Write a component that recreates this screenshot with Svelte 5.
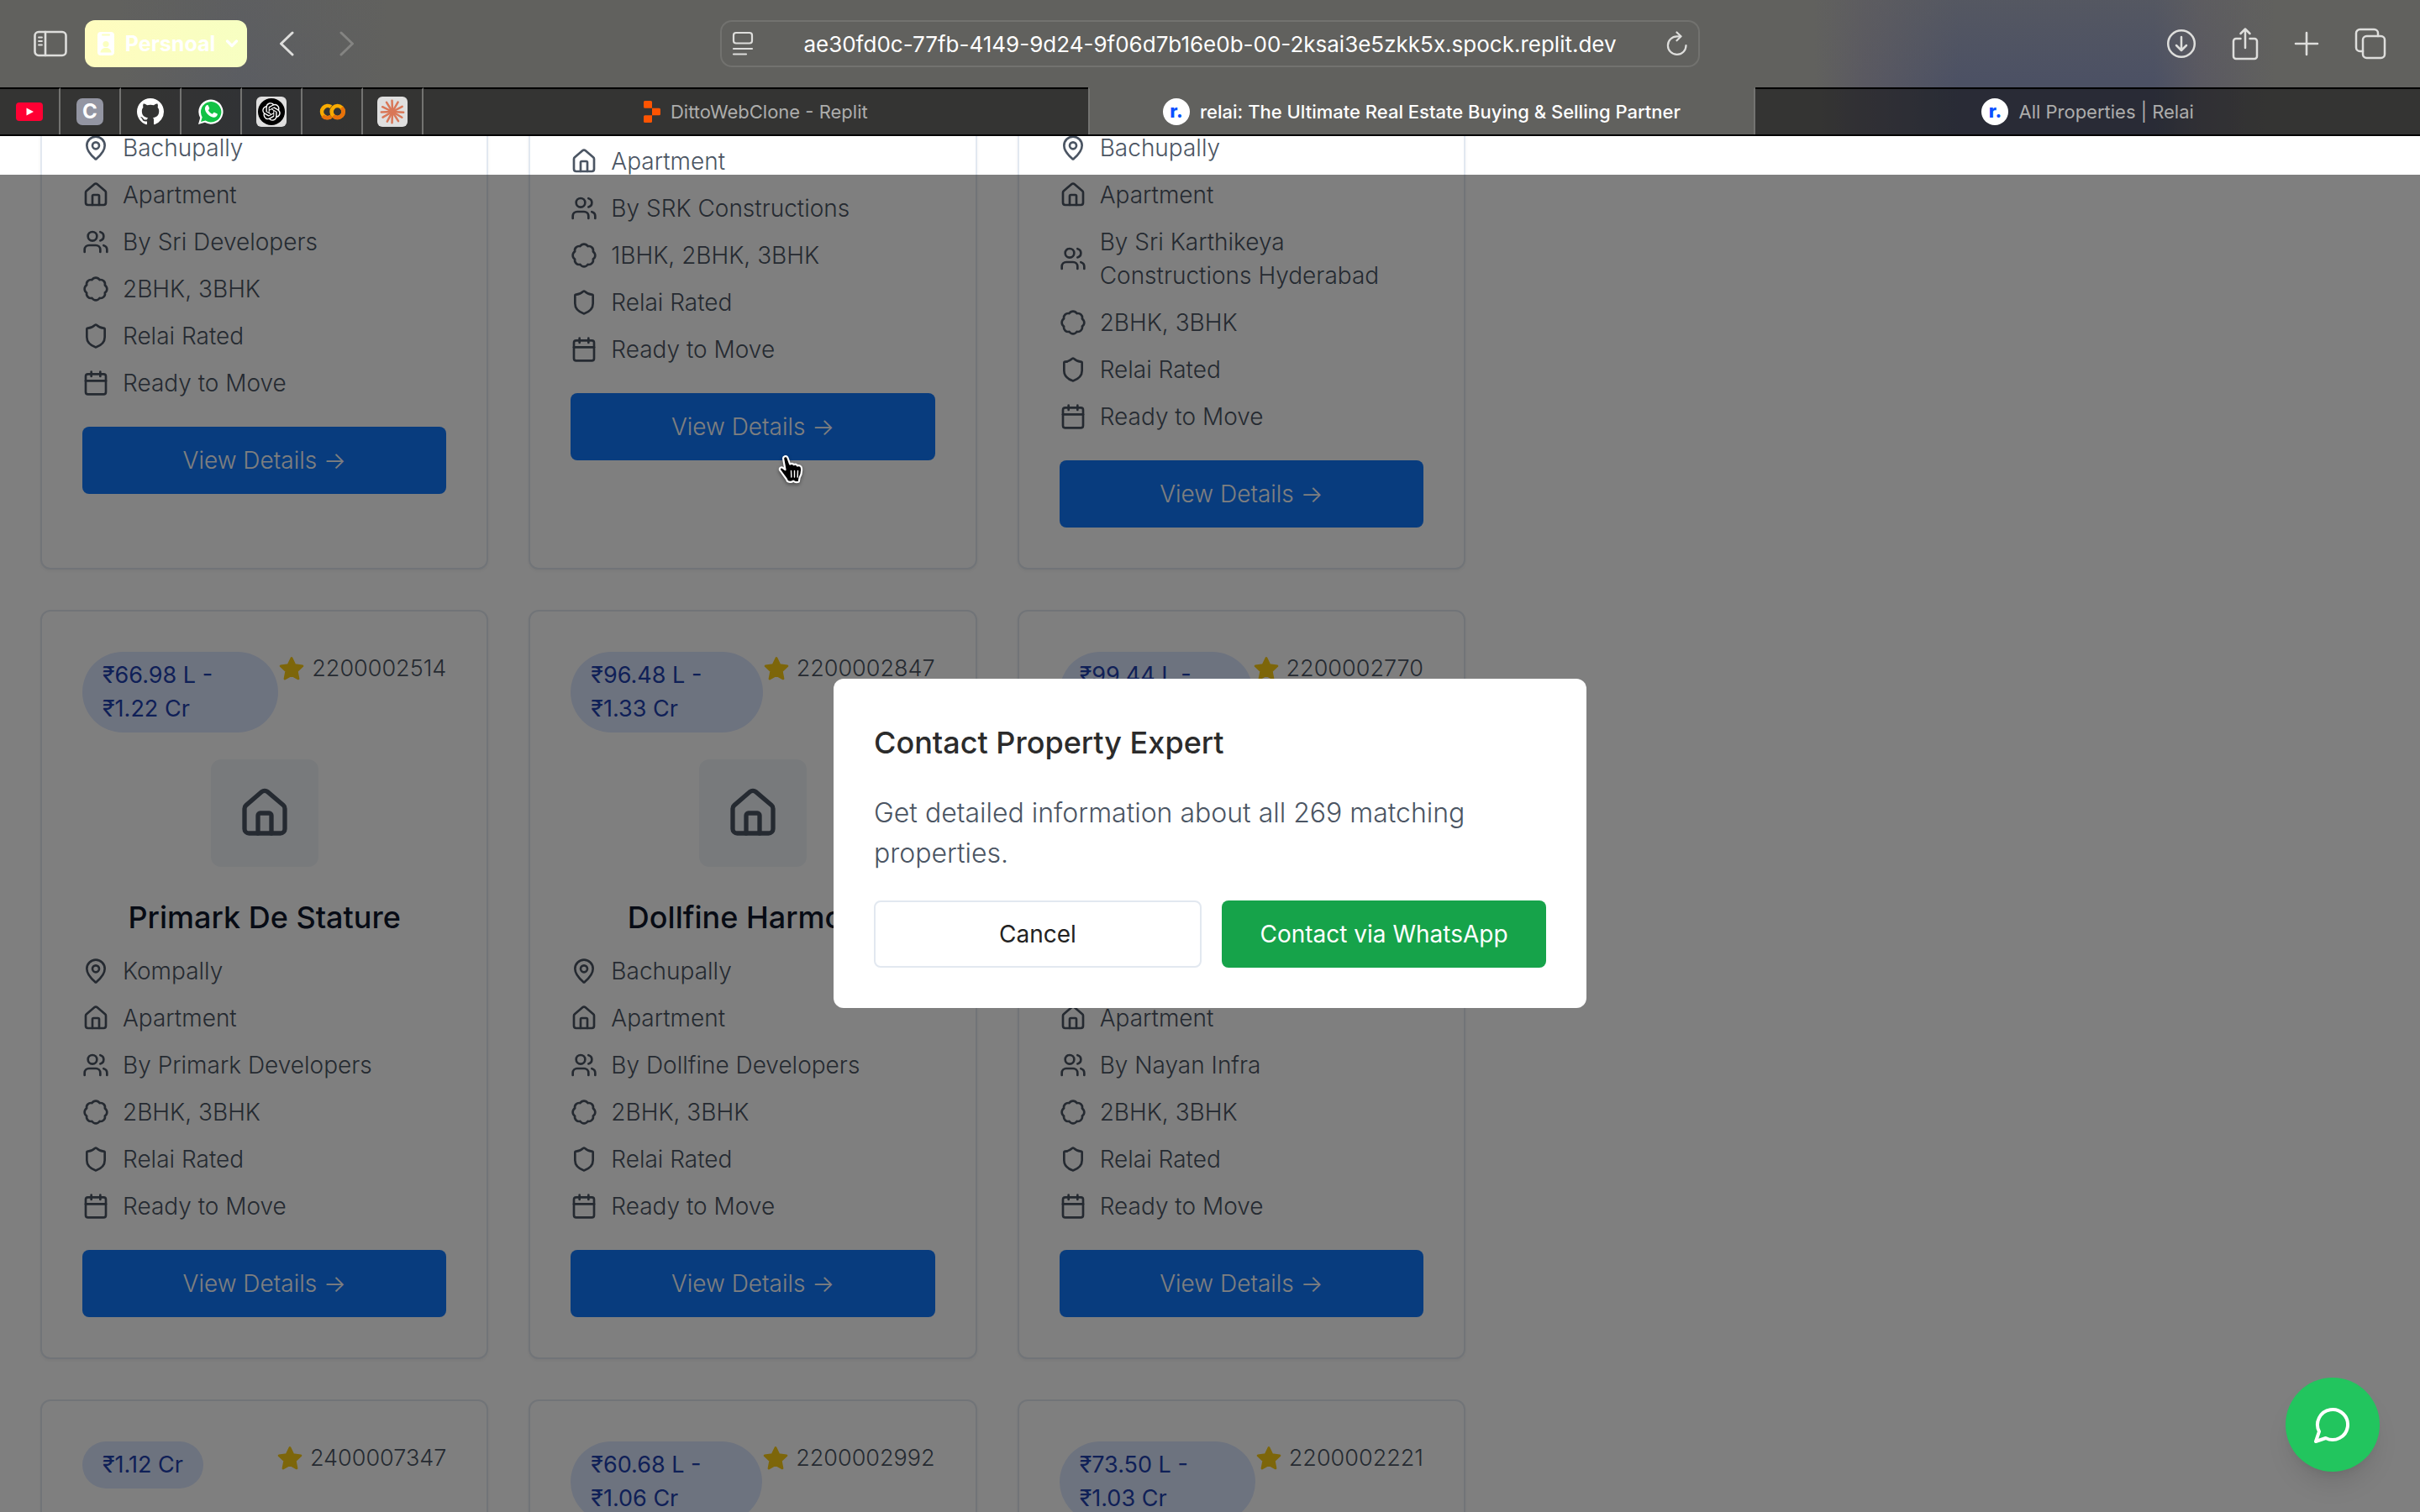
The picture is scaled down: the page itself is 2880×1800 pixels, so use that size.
<script>
  import { onMount } from 'svelte';

  const icons = {
    pin: ['M20 10c0 4.993-5.539 10.193-7.399 11.799a1 1 0 0 1-1.202 0C9.539 20.193 4 14.993 4 10a8 8 0 0 1 16 0', 'M9 10a3 3 0 1 0 6 0a3 3 0 1 0-6 0'],
    house: ['M15 21v-8a1 1 0 0 0-1-1h-4a1 1 0 0 0-1 1v8', 'M3 10a2 2 0 0 1 .709-1.528l7-5.999a2 2 0 0 1 2.582 0l7 5.999A2 2 0 0 1 21 10v9a2 2 0 0 1-2 2H5a2 2 0 0 1-2-2z'],
    users: ['M16 21v-2a4 4 0 0 0-4-4H6a4 4 0 0 0-4 4v2', 'M5 7a4 4 0 1 0 8 0a4 4 0 1 0-8 0', 'M22 21v-2a4 4 0 0 0-3-3.87', 'M16 3.13a4 4 0 0 1 0 7.75'],
    badge: ['M3.85 8.62a4 4 0 0 1 4.78-4.77 4 4 0 0 1 6.74 0 4 4 0 0 1 4.78 4.78 4 4 0 0 1 0 6.74 4 4 0 0 1-4.77 4.78 4 4 0 0 1-6.75 0 4 4 0 0 1-4.78-4.77 4 4 0 0 1 0-6.76Z'],
    shield: ['M20 13c0 5-3.5 7.5-7.66 8.95a1 1 0 0 1-.67-.01C7.5 20.5 4 18 4 13V6a1 1 0 0 1 1-1c2 0 4.5-1.2 6.24-2.72a1.17 1.17 0 0 1 1.52 0C14.51 3.81 17 5 19 5a1 1 0 0 1 1 1z'],
    calendar: ['M8 2v4', 'M16 2v4', 'M5 4h14a2 2 0 0 1 2 2v14a2 2 0 0 1-2 2H5a2 2 0 0 1-2-2V6a2 2 0 0 1 2-2z', 'M3 10h18'],
    message: ['M7.9 20A9 9 0 1 0 4 16.1L2 22Z']
  };

  const properties = [
    { price: '₹72.40 L - ₹1.10 Cr', id: '2200002310', name: 'Sri Residency', area: 'Bachupally', builder: 'Sri Developers', units: '2BHK, 3BHK' },
    { price: '₹48.00 L', id: '2200002405', name: 'SRK Heights', area: 'Bachupally', builder: 'SRK Constructions', units: '1BHK, 2BHK, 3BHK' },
    { price: '₹68.25 L - ₹1.05 Cr', id: '2200002618', name: 'Sri Karthikeya', area: 'Bachupally', builder: 'Sri Karthikeya Constructions Hyderabad', units: '2BHK, 3BHK' },
    { price: '₹66.98 L - ₹1.22 Cr', id: '2200002514', name: 'Primark De Stature', area: 'Kompally', builder: 'Primark Developers', units: '2BHK, 3BHK' },
    { price: '₹96.48 L - ₹1.33 Cr', id: '2200002847', name: 'Dollfine Harmony', area: 'Bachupally', builder: 'Dollfine Developers', units: '2BHK, 3BHK' },
    { price: '₹99.44 L - ₹1.41 Cr', id: '2200002770', name: 'Nayan Residency', area: 'Bachupally', builder: 'Nayan Infra', units: '2BHK, 3BHK' },
    { price: '₹1.12 Cr', id: '2400007347', name: 'Green Court', area: 'Kompally', builder: 'Green Developers', units: '3BHK' },
    { price: '₹60.68 L - ₹1.06 Cr', id: '2200002992', name: 'Lake View', area: 'Kompally', builder: 'Lake Developers', units: '2BHK, 3BHK' },
    { price: '₹73.50 L - ₹1.03 Cr', id: '2200002221', name: 'Park Avenue', area: 'Bachupally', builder: 'Park Developers', units: '2BHK, 3BHK' }
  ];

  const rays = [3, 31, 58, 92, 118, 150, 178, 206, 238, 268, 300, 332];

  let scroller;
  let url = $state('ae30fd0c-77fb-4149-9d24-9f06d7b16e0b-00-2ksai3e5zkk5x.spock.replit.dev');

  // Open on the second row of results
  onMount(() => {
    scroller.scrollTop = 464;
  });
</script>

{#snippet icon(name, cls)}
  <svg class={cls} viewBox="0 0 24 24" fill="none" stroke="currentColor" stroke-width="2" stroke-linecap="round" stroke-linejoin="round" aria-hidden="true">
    {#each icons[name] as d}<path {d} />{/each}
  </svg>
{/snippet}

{#snippet detail(name, text)}
  <li>{@render icon(name, 'row-icon')}<span>{text}</span></li>
{/snippet}

<div class="window">
  <header class="chrome">
    <div class="toolbar">
      <div class="tools left">
        <button class="tool" aria-label="Toggle sidebar">
          <svg width="40" height="32" viewBox="0 0 40 32" fill="none" stroke="currentColor" stroke-width="2.6" stroke-linecap="round"><rect x="1.5" y="2" width="37" height="28" rx="4.5" /><path d="M14 2v28" /><path d="M6 8.5h4M6 13h4M6 17.5h4" stroke-width="1.8" /></svg>
        </button>
        <button class="profile">
          <svg width="22" height="28" viewBox="0 0 22 28"><rect x="1" y="0" width="20" height="28" rx="4" fill="#fff" /><path d="M7 3.5h8" stroke="#fbffc0" stroke-width="2" stroke-linecap="round" /><circle cx="11" cy="14.5" r="3.6" fill="#fbffc0" /><path d="M4.500 24.500c0-7.500 13-7.500 13 0z" fill="#fbffc0" /></svg>
          <span>Persnoal</span>
          <svg width="16" height="10" viewBox="0 0 16 10" fill="none" stroke="#fff" stroke-width="3.2" stroke-linecap="round" stroke-linejoin="round"><path d="M2.500 2l5.500 5.500L13.500 2" /></svg>
        </button>
        <button class="tool back" aria-label="Back">
          <svg width="18" height="30" viewBox="0 0 18 30" fill="none" stroke="currentColor" stroke-width="3" stroke-linecap="round" stroke-linejoin="round"><path d="M16 2L2.500 15L16 28" /></svg>
        </button>
        <button class="tool forward" aria-label="Forward" disabled>
          <svg width="18" height="30" viewBox="0 0 18 30" fill="none" stroke="currentColor" stroke-width="3" stroke-linecap="round" stroke-linejoin="round"><path d="M2 2l13.500 13L2 28" /></svg>
        </button>
      </div>

      <div class="address">
        <button class="tool" aria-label="Page settings">
          <svg width="26" height="30" viewBox="0 0 26 30" fill="none" stroke="currentColor" stroke-width="2.200" stroke-linecap="round"><rect x="2" y="2" width="22" height="12.500" rx="3" /><path d="M2 21h22M2 27.500h15" /></svg>
        </button>
        <input type="text" aria-label="Address" bind:value={url} />
        <button class="tool" aria-label="Reload">
          <svg width="26" height="30" viewBox="0 0 26 30" fill="none" stroke="currentColor" stroke-width="2.200" stroke-linecap="round" stroke-linejoin="round"><path d="M23.500 17A10.800 10.800 0 1 1 12.700 6.300h4.500" /><path d="M12.500 1.500l5 4.800l-5 5" /></svg>
        </button>
      </div>

      <div class="tools right">
        <button class="tool" aria-label="Downloads">
          <svg width="36" height="36" viewBox="0 0 36 36" fill="none" stroke="currentColor" stroke-width="2.500" stroke-linecap="round" stroke-linejoin="round"><circle cx="18" cy="18" r="15.800" /><path d="M18 10v15.500M12 20l6 6l6-6" /></svg>
        </button>
        <button class="tool" aria-label="Share">
          <svg width="32" height="40" viewBox="0 0 32 40" fill="none" stroke="currentColor" stroke-width="2.500" stroke-linecap="round" stroke-linejoin="round"><path d="M10.500 14H5a3 3 0 0 0-3 3v18a3 3 0 0 0 3 3h22a3 3 0 0 0 3-3V17a3 3 0 0 0-3-3h-5.500" /><path d="M16 25V3M10.500 8L16 2.500L21.500 8" /></svg>
        </button>
        <button class="tool" aria-label="New tab">
          <svg width="30" height="30" viewBox="0 0 30 30" fill="none" stroke="currentColor" stroke-width="2.600" stroke-linecap="round"><path d="M15 2v26M2 15h26" /></svg>
        </button>
        <button class="tool" aria-label="Tab overview">
          <svg width="38" height="38" viewBox="0 0 38 38" fill="none" stroke="currentColor" stroke-width="2.500" stroke-linecap="round" stroke-linejoin="round"><rect x="10" y="10" width="26" height="26" rx="4.500" /><path d="M10 28H6.500A4.500 4.500 0 0 1 2 23.500V6.500A4.500 4.500 0 0 1 6.500 2h17A4.500 4.500 0 0 1 28 6.500V10" /></svg>
        </button>
      </div>
    </div>

    <nav class="tabs" aria-label="Tabs">
      <button class="pinned" aria-label="YouTube">
        <svg width="32" height="22" viewBox="0 0 32 22"><rect width="32" height="22" rx="4" fill="#ff0033" /><path d="M12.500 6.500v9l8.500-4.500z" fill="#fff" /></svg>
      </button>
      <button class="pinned" aria-label="C"><span class="letter">C</span></button>
      <button class="pinned" aria-label="GitHub">
        <svg width="32" height="32" viewBox="0 0 16 16" fill="#fff"><path d="M8 0C3.580 0 0 3.580 0 8c0 3.540 2.290 6.530 5.470 7.590.4.070.55-.17.55-.38 0-.19-.01-.82-.01-1.490-2.010.37-2.530-.49-2.690-.94-.09-.23-.48-.94-.82-1.130-.28-.15-.68-.52-.01-.53.63-.01 1.080.58 1.230.82.72 1.210 1.870.87 2.330.66.07-.52.28-.87.51-1.070-1.780-.2-3.640-.89-3.640-3.950 0-.87.31-1.590.82-2.150-.08-.2-.36-1.020.08-2.120 0 0 .67-.21 2.200.82.64-.18 1.320-.27 2-.27s1.360.09 2 .27c1.530-1.040 2.200-.82 2.200-.82.44 1.100.16 1.920.08 2.120.51.56.82 1.270.82 2.150 0 3.070-1.870 3.750-3.650 3.950.29.25.54.73.54 1.480 0 1.070-.01 1.930-.01 2.200 0 .21.15.46.55.38A8.010 8.010 0 0 0 16 8c0-4.420-3.580-8-8-8z" /></svg>
      </button>
      <button class="pinned" aria-label="WhatsApp">
        <svg width="32" height="32" viewBox="0 0 32 32"><path d="M1 31l2.200-7.800A14.600 14.600 0 1 1 8.800 28.800z" fill="#fff" /><path d="M4 28l1.700-5.500A12.200 12.200 0 1 1 9.500 26.500z" fill="#12c245" /><path d="M10.700 8.600c.8-.8 1.900-.6 2.300.3l1.100 2.700c.2.500.1.900-.2 1.300l-1 1.300c1.100 2.200 2.700 3.600 4.900 4.600l1.500-1.700c.3-.4.700-.4 1.100-.2l2.800 1.400c.6.300.8.600.6 1.300c-.5 2.300-2.600 3.500-4.800 3.100c-5-1-9.100-5-10-9.400c-.3-1.700.4-3.500 1.700-4.700z" fill="#fff" /></svg>
      </button>
      <button class="pinned" aria-label="ChatGPT">
        <span class="tile"><svg width="32" height="32" viewBox="0 0 32 32"><circle cx="16" cy="16" r="16" fill="#000" /><path transform="translate(5.200 5.200) scale(.9)" fill="#fff" d="M22.2819 9.8211a5.9847 5.9847 0 0 0-.5157-4.9108 6.0462 6.0462 0 0 0-6.5098-2.9A6.0651 6.0651 0 0 0 4.9807 4.1818a5.9847 5.9847 0 0 0-3.9977 2.9 6.0462 6.0462 0 0 0 .7427 7.0966 5.98 5.98 0 0 0 .511 4.9107 6.051 6.051 0 0 0 6.5146 2.9001A5.9847 5.9847 0 0 0 13.2599 24a6.0557 6.0557 0 0 0 5.7718-4.2058 5.9894 5.9894 0 0 0 3.9977-2.9001 6.0557 6.0557 0 0 0-.7475-7.0729zm-9.022 12.6081a4.4755 4.4755 0 0 1-2.8764-1.0408l.1419-.0804 4.7783-2.7582a.7948.7948 0 0 0 .3927-.6813v-6.7369l2.02 1.1686a.071.071 0 0 1 .038.052v5.5826a4.504 4.504 0 0 1-4.4945 4.4944zm-9.6607-4.1254a4.4708 4.4708 0 0 1-.5346-3.0137l.142.0852 4.783 2.7582a.7712.7712 0 0 0 .7806 0l5.8428-3.3685v2.3324a.0804.0804 0 0 1-.0332.0615L9.74 19.9502a4.4992 4.4992 0 0 1-6.1408-1.6464zM2.3408 7.8956a4.485 4.485 0 0 1 2.3655-1.9728V11.6a.7664.7664 0 0 0 .3879.6765l5.8144 3.3543-2.0201 1.1685a.0757.0757 0 0 1-.071 0l-4.8303-2.7865A4.504 4.504 0 0 1 2.3408 7.872zm16.5963 3.8558L13.1038 8.364 15.1192 7.2a.0757.0757 0 0 1 .071 0l4.8303 2.7913a4.4944 4.4944 0 0 1-.6765 8.1042v-5.6772a.79.79 0 0 0-.407-.667zm2.0107-3.0231l-.142-.0852-4.7735-2.7818a.7759.7759 0 0 0-.7854 0L9.409 9.2297V6.8974a.0662.0662 0 0 1 .0284-.0615l4.8303-2.7866a4.4992 4.4992 0 0 1 6.6802 4.66zM8.3065 12.863l-2.02-1.1638a.0804.0804 0 0 1-.038-.0567V6.0742a4.4992 4.4992 0 0 1 7.3757-3.4537l-.142.0805L8.704 5.459a.7948.7948 0 0 0-.3927.6813zm1.0976-2.3654l2.602-1.4998 2.6069 1.4998v2.9994l-2.5974 1.4997-2.6067-1.4997Z" /></svg></span>
      </button>
      <button class="pinned" aria-label="Colab">
        <svg width="32" height="20" viewBox="0 0 32 20" fill="none" stroke-width="4.600"><path d="M15 4.200a7 7 0 1 0 0 11.600" stroke="#f9ab00" /><path d="M5.050 14.950A7 7 0 0 0 15 15.500" stroke="#e8710a" /><circle cx="22.600" cy="10" r="7" stroke="#f9ab00" /><path d="M27.550 5.050a7 7 0 0 1-9.900 9.900" stroke="#e8710a" /></svg>
      </button>
      <button class="pinned" aria-label="Claude">
        <span class="tile"><svg width="32" height="32" viewBox="0 0 32 32" stroke="#d97757" stroke-width="2.500" stroke-linecap="round">{#each rays as a}<path d="M16 16h13.200" transform="rotate({a} 16 16)" />{/each}</svg></span>
      </button>
      <button class="tab">
        <svg width="20" height="26" viewBox="0 0 20 26" fill="#fd5402"><path d="M0 1.500A1.500 1.500 0 0 1 1.500 0h7A1.500 1.500 0 0 1 10 1.500V8.700H1.500A1.500 1.500 0 0 1 0 7.200zM10 8.700h8.500A1.500 1.500 0 0 1 20 10.200v5.600a1.500 1.500 0 0 1-1.500 1.500H10zM0 18.800a1.500 1.500 0 0 1 1.500-1.500H10v7.200A1.500 1.500 0 0 1 8.500 26h-7A1.500 1.500 0 0 1 0 24.500z" /></svg>
        <span>DittoWebClone - Replit</span>
      </button>
      <button class="tab active"><span class="relai">r.</span><span>relai: The Ultimate Real Estate Buying &amp; Selling Partner</span></button>
      <button class="tab"><span class="relai">r.</span><span>All Properties | Relai</span></button>
    </nav>
  </header>

  <div class="page">
    <main class="scroller" bind:this={scroller}>
      <div class="grid">
        {#each properties as p}
          <article class="card">
            <div class="top">
              <span class="price">{p.price}</span>
              <span class="rating">
                <svg class="row-icon" viewBox="0 0 24 24" fill="#facc15" stroke="#facc15" stroke-width="2" stroke-linejoin="round" aria-hidden="true"><path d="M12 2.500l2.950 6.200 6.800.9-5 4.700 1.300 6.700L12 17.700 5.950 21l1.300-6.700-5-4.700 6.800-.9z" /></svg>
                {p.id}
              </span>
            </div>
            <div class="thumb">{@render icon('house', 'big-icon')}</div>
            <h3>{p.name}</h3>
            <ul>
              {@render detail('pin', p.area)}
              {@render detail('house', 'Apartment')}
              {@render detail('users', `By ${p.builder}`)}
              {@render detail('badge', p.units)}
              {@render detail('shield', 'Relai Rated')}
              {@render detail('calendar', 'Ready to Move')}
            </ul>
            <button class="view">View Details →</button>
          </article>
        {/each}
      </div>
    </main>

    <div class="overlay">
      <div class="modal" role="dialog" aria-modal="true" aria-labelledby="modal-title">
        <h2 id="modal-title">Contact Property Expert</h2>
        <p>Get detailed information about all 269 matching properties.</p>
        <div class="actions">
          <button class="cancel">Cancel</button>
          <button class="contact">Contact via WhatsApp</button>
        </div>
      </div>
    </div>

    <button class="fab" aria-label="Chat on WhatsApp">{@render icon('message', 'fab-icon')}</button>

    <svg class="cursor" width="34" height="40" viewBox="0 0 34 40" aria-hidden="true">
      <path d="M8.500 3.500c1.700-1 3.400 0 4 1.700l2.600 7.300c1.600-1.100 3.600-.8 4.500.7c1.600-.9 3.400-.4 4.300 1.200c2.300-.8 4.800.4 5.100 3.200c.4 4-.2 7.600-2.400 11l-.8 4.800c-2.400 1-4.800.7-6.700-.8c-1.800 1.600-4.600 1.600-7 .5c-.8-3.300-3.300-5.200-5.200-8.200l-3.800-5.300c-1-2.200 1.400-3.900 3.400-2.800l3 2.400L7.200 6.500c-.3-1.200.2-2.400 1.300-3z" fill="#000" stroke="#fff" stroke-width="2.200" stroke-linejoin="round" />
      <path d="M16.500 20.500l.3 7.500M20.500 20.500v7.500M24.500 20.500l-.3 7.500" stroke="#fff" stroke-width="1.400" stroke-linecap="round" />
    </svg>
  </div>
</div>

<style>
  :global(body) {
    margin: 0;
    background: #fff;
  }
  .window {
    display: flex;
    flex-direction: column;
    height: 100vh;
    overflow: hidden;
    font-family: Inter, "Noto Sans", sans-serif;
  }
  button, input {
    font-family: inherit;
    border: 0;
    margin: 0;
    padding: 0;
    background: none;
    box-sizing: border-box;
  }
  svg { display: block; flex: none; }

  /* Browser chrome */
  .chrome {
    flex: none;
    background:
      linear-gradient(180deg, rgba(97, 97, 94, .4), rgba(97, 97, 94, 0) 60%),
      linear-gradient(90deg, #61615e 0%, #61615e 5%, #5b5d62 10%, #61615e 16%, #61615e 75%, #5a5961 77%, #4c5164 81%, #4c5164 89%, #5a5961 91%, #61615e 94%, #61615e 100%);
    border-bottom: 2px solid #000;
  }
  .toolbar {
    display: grid;
    grid-template-columns: 1fr minmax(0, 1166px) 1fr;
    align-items: center;
    height: 104px;
    box-sizing: border-box;
    padding: 0 40px;
  }
  .tools { display: flex; align-items: center; }
  .tool { color: #dededc; }
  .profile {
    display: flex;
    align-items: center;
    justify-content: space-between;
    width: 193px;
    height: 56px;
    margin-left: 21px;
    padding: 0 10px 0 14px;
    border-radius: 12px;
    background: linear-gradient(90deg, #fffcbf, #f7ffc2);
    color: #fff;
    font-size: 25px;
    font-weight: 700;
  }
  .back { margin-left: 38px; }
  .forward { margin-left: 54px; color: #848482; }
  .right { justify-content: flex-end; gap: 42px; }
  .address {
    display: flex;
    align-items: center;
    height: 56px;
    padding: 0 12px;
    box-sizing: border-box;
    border: 2px solid #72726f;
    border-radius: 14px;
  }
  .address input {
    flex: 1;
    min-width: 0;
    color: #fff;
    font-size: 26px;
    font-weight: 400;
    text-align: center;
    outline: none;
  }
  .tabs { display: flex; height: 56px; }
  .pinned {
    display: flex;
    align-items: center;
    justify-content: center;
    width: 72px;
    flex: none;
    border-top: 2px solid #000;
    border-right: 2px solid #737371;
    background: rgba(0, 0, 0, .46);
  }
  .letter {
    width: 32px;
    height: 32px;
    border-radius: 7px;
    background: #9395a2;
    color: #fff;
    font-size: 24px;
    line-height: 32px;
    font-weight: 700;
  }
  .tile {
    padding: 2px;
    border-radius: 6px;
    background: #dfdfdf;
  }
  .tab {
    flex: 1 1 0;
    display: flex;
    align-items: center;
    justify-content: center;
    gap: 12px;
    min-width: 0;
    border-top: 2px solid #000;
    background: rgba(0, 0, 0, .46);
    color: #adadac;
    font-size: 22px;
    white-space: nowrap;
  }
  .tab.active {
    border-top-color: transparent;
    border-left: 2px solid #737371;
    border-right: 2px solid #737371;
    background: none;
    color: #fff;
    font-weight: 500;
  }
  .relai {
    width: 32px;
    height: 32px;
    border-radius: 50%;
    background: #fff;
    color: #0a50ff;
    font-size: 22px;
    line-height: 30px;
    font-weight: 800;
  }

  /* Results */
  .page {
    position: relative;
    flex: 1;
    min-height: 0;
  }
  .scroller {
    height: 100%;
    overflow-y: scroll;
    scrollbar-width: none;
    display: grid;
    grid-template-columns: 28fr 17fr;
  }
  .grid {
    display: grid;
    grid-template-columns: repeat(3, minmax(0, 1fr));
    gap: 48px;
    padding: 48px;
  }
  .card {
    padding: 48px;
    border: 2px solid #e2e8f0;
    border-radius: 12px;
    background: #fff;
    box-shadow: 0 2px 4px rgba(0, 0, 0, .05);
    color: #4b5563;
    font-size: 28px;
    line-height: 40px;
    font-weight: 300;
  }
  .top {
    display: flex;
    justify-content: space-between;
    align-items: flex-start;
    font-size: 27px;
  }
  .price {
    padding: 8px 24px;
    border-radius: 48px;
    background: #dbe6fe;
    color: #1e40af;
    font-weight: 400;
  }
  .rating {
    display: flex;
    align-items: center;
    gap: 8px;
    white-space: nowrap;
  }
  .thumb {
    display: flex;
    align-items: center;
    justify-content: center;
    width: 128px;
    height: 128px;
    margin: 32px auto;
    border-radius: 12px;
    background: #f1f5f9;
  }
  h3 {
    margin: 0 0 16px;
    color: #0f172a;
    font-size: 36px;
    line-height: 56px;
    font-weight: 500;
    text-align: center;
  }
  ul {
    display: flex;
    flex-direction: column;
    gap: 16px;
    margin: 0;
    padding: 0;
    list-style: none;
  }
  li {
    display: flex;
    align-items: center;
    gap: 16px;
  }
  .card :global(.row-icon) { width: 32px; height: 32px; }
  .card :global(.big-icon) { width: 64px; height: 64px; }
  .view {
    width: 100%;
    height: 80px;
    margin-top: 32px;
    border-radius: 8px;
    background: #1078fc;
    color: #fff;
    font-size: 28px;
    font-weight: 300;
  }

  /* Dialog */
  .overlay {
    position: absolute;
    inset: 46px 0 0;
    display: flex;
    align-items: center;
    justify-content: center;
    background: rgba(0, 0, 0, .5);
  }
  .modal {
    width: 100%;
    max-width: 896px;
    padding: 48px;
    box-sizing: border-box;
    border-radius: 12px;
    background: #fff;
  }
  h2 {
    margin: 0 0 32px;
    color: #2b2b2b;
    font-size: 36px;
    line-height: 56px;
    font-weight: 500;
  }
  .modal p {
    margin: 0 0 32px;
    color: #4b5563;
    font-size: 32px;
    line-height: 48px;
    font-weight: 300;
  }
  .actions { display: flex; gap: 24px; }
  .actions button {
    flex: 1 1 0;
    height: 80px;
    border-radius: 8px;
    font-size: 28px;
  }
  .actions .cancel {
    border: 2px solid #e2e8f0;
    background: #fff;
    color: #222;
  }
  .actions .contact { background: #16a34a; color: #fff; }

  .fab {
    position: absolute;
    right: 48px;
    bottom: 48px;
    display: flex;
    align-items: center;
    justify-content: center;
    width: 112px;
    height: 112px;
    border-radius: 50%;
    background: #22c55e;
    color: #fff;
    box-shadow: 0 20px 30px -6px rgba(0, 0, 0, .1), 0 8px 12px -8px rgba(0, 0, 0, .1);
  }
  .fab :global(.fab-icon) { width: 48px; height: 48px; }
  .cursor {
    position: absolute;
    left: 925px;
    top: 378px;
    filter: drop-shadow(0 2px 2px rgba(0, 0, 0, .4));
  }
</style>
